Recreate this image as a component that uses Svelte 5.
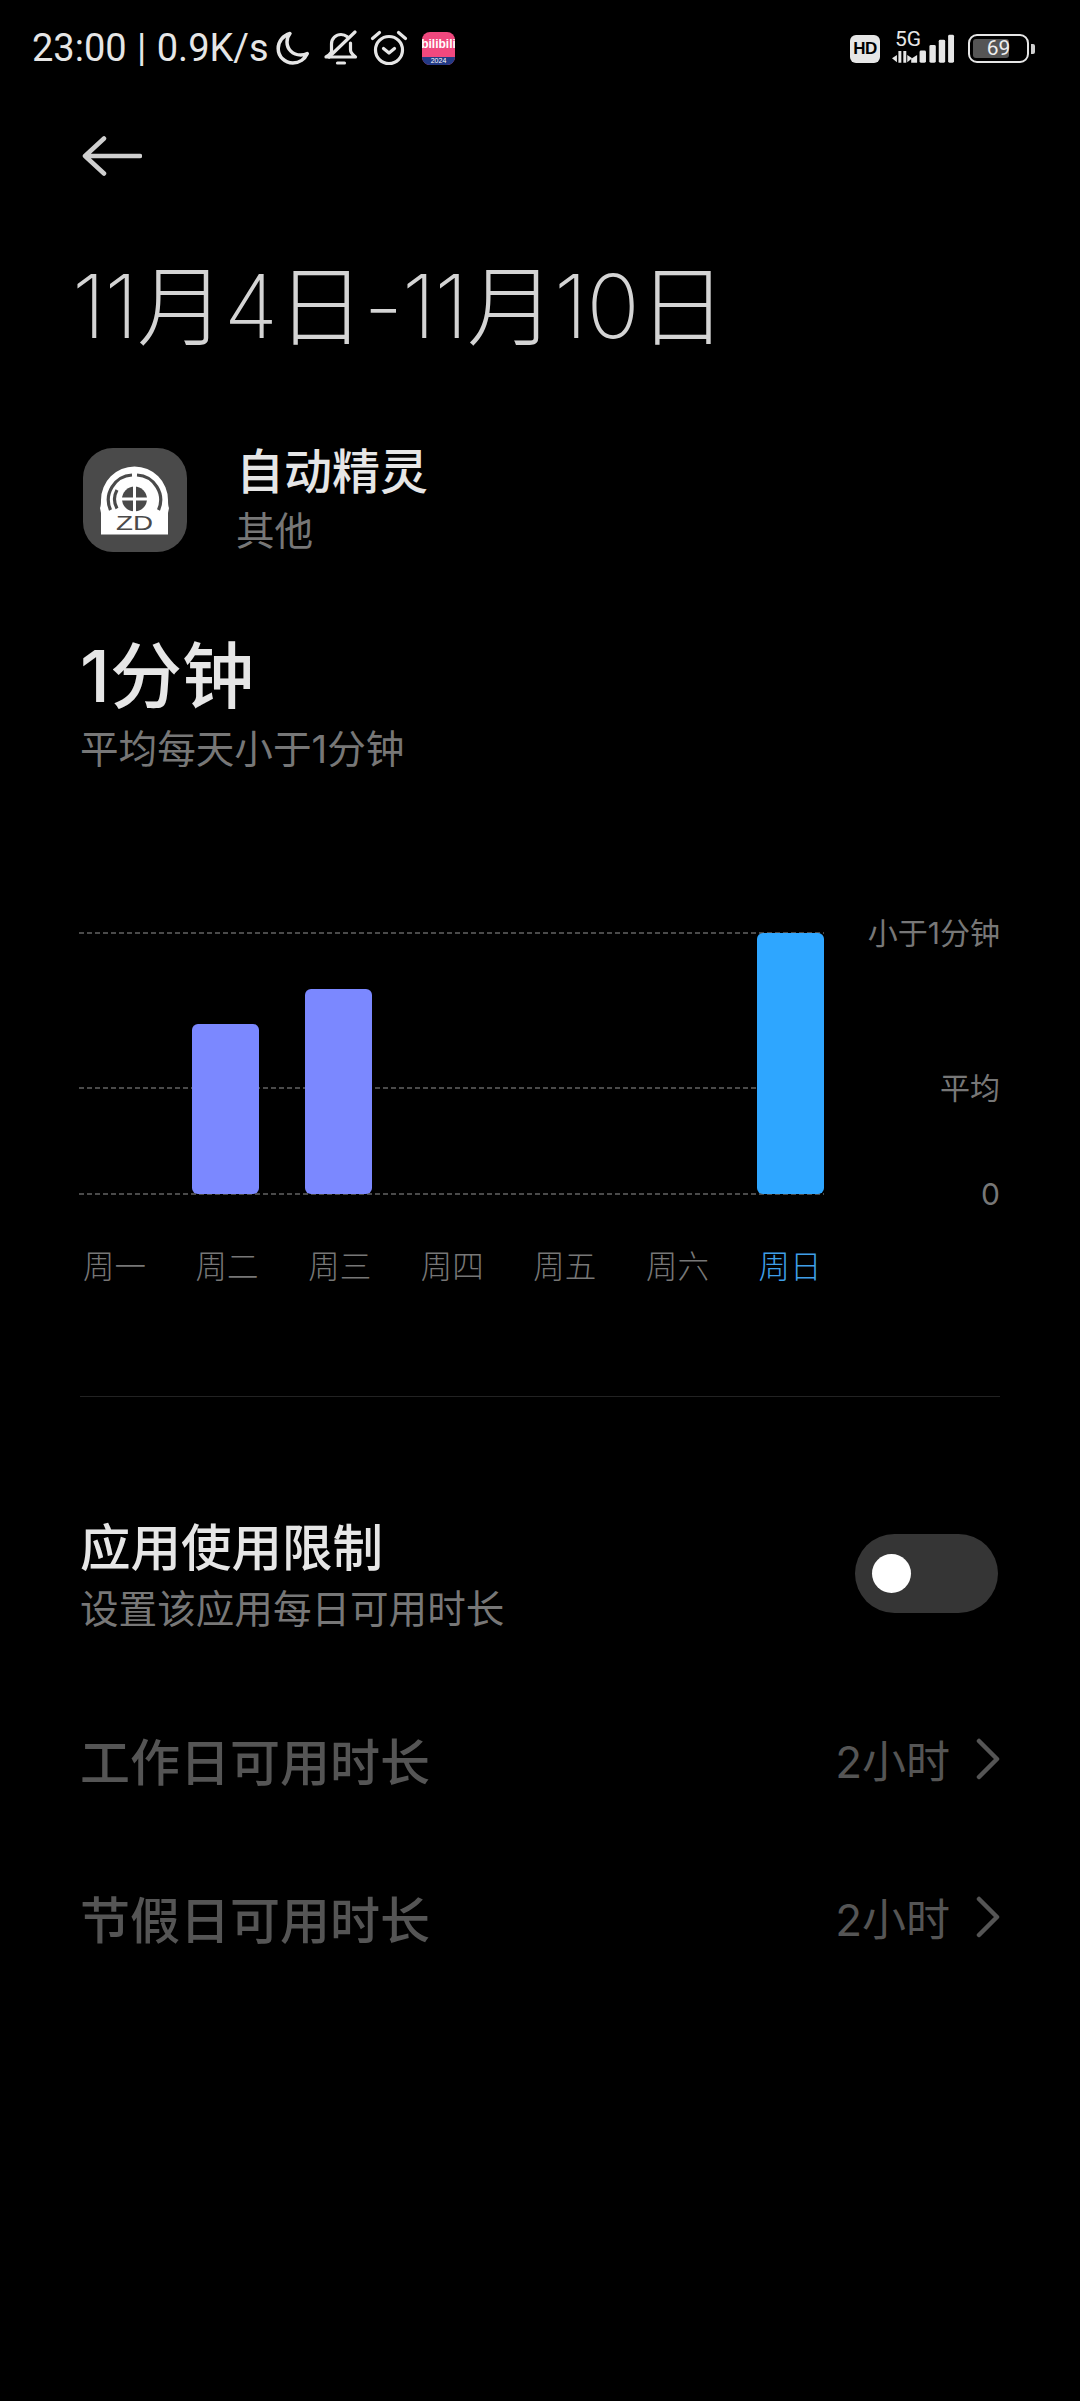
<script>
  const days = [
    { label: '周一', height: 0 },
    { label: '周二', height: 170 },
    { label: '周三', height: 205 },
    { label: '周四', height: 0 },
    { label: '周五', height: 0 },
    { label: '周六', height: 0 },
    { label: '周日', height: 261, active: true }
  ];
  const limits = ['工作日可用时长', '节假日可用时长'];
</script>

<div class="page">
  <header class="status">
    <div class="status-left">
      <span class="time">23:00 | 0.9K/s</span>
      <svg class="ico moon" viewBox="0 0 34 34" fill="none" stroke="#e6e6e6" stroke-width="3.500" stroke-linejoin="round" stroke-linecap="round">
        <path d="M14 2.500C7 4.500 2.200 10.500 2.200 17.500c0 8.200 6.600 14.500 14.600 14.500 6.500 0 12-3.800 14.500-9.500-2 1-4.200 1.500-6.600 1.500C16.500 24 11 18 11 11c0-3.200 1.100-6.200 3-8.500z"/>
      </svg>
      <svg class="ico bell" viewBox="0 0 36 36" fill="none" stroke="#e6e6e6" stroke-width="3.200" stroke-linecap="round" stroke-linejoin="round">
        <path d="M8.500 21V14C8.500 8.500 13 4.500 18 4.500c2.400 0 4.600.8 6.300 2.200"/>
        <path d="M27.500 13v7c0 2.500 2.500 5 5 7H3c2.200-1.300 4-2.800 5-4.500"/>
        <path d="M32 2 6 27"/>
        <path d="M14.500 33h7"/>
      </svg>
      <svg class="ico alarm" viewBox="0 0 38 36" fill="none" stroke="#e6e6e6" stroke-width="3.200" stroke-linecap="round" stroke-linejoin="round">
        <circle cx="19" cy="20" r="13.500"/>
        <path d="M13.500 18.500 19 23l5.500-4.500"/>
        <path d="M2.500 8.500 9.500 2.500M35.500 8.500 28.500 2.500"/>
      </svg>
      <div class="bili">
        <span class="bili-name">bilibili</span>
        <span class="bili-strip">2024</span>
      </div>
    </div>
    <div class="status-right">
      <span class="hd">HD</span>
      <div class="net">
        <span class="five">5G</span>
        <svg class="signal" viewBox="0 0 64 30" fill="#e6e6e6">
          <path d="M0 24.500l5-3.500v7.500zM6.500 17h3v12h-3zM11.500 17h3v12h-3zM15.500 21l5 3.500-5 4z"/>
          <path d="M19 25l6-4v8h-6z" transform="translate(0.500 0)"/>
          <rect x="28" y="16.500" width="6.500" height="12.500" rx="1.500"/>
          <rect x="38" y="11" width="6.500" height="18" rx="1.500"/>
          <rect x="47.500" y="5.500" width="6.500" height="23.500" rx="1.500"/>
          <rect x="57" y="0.500" width="6" height="28.500" rx="1.500"/>
        </svg>
      </div>
      <div class="battery">
        <div class="battery-body">
          <div class="battery-fill"></div>
          <span class="battery-num">69</span>
        </div>
        <div class="battery-tip"></div>
      </div>
    </div>
  </header>

  <svg class="back" viewBox="0 0 60 40" fill="none" stroke="#cfcfcf" stroke-width="4.500" stroke-linecap="round" stroke-linejoin="round">
    <path d="M22 2.500 3 20l19 17.500M3 20h55"/>
  </svg>

  <h1 class="title">11月4日-11月10日</h1>

  <section class="app">
    <svg class="app-icon" viewBox="0 0 104 104">
      <rect width="104" height="104" rx="30" fill="#4a4a4a"/>
      <path d="M18 52a33.500 33.500 0 0 1 67 0q0 6 1 8l-1 5v17q0 4-4 4H22q-4 0-4-4V65l-1-5q1-2 1-8z" fill="#fff"/>
      <g fill="none" stroke="#4a4a4a" stroke-width="3.200">
        <path d="M27.500 62A25 25 0 0 1 49 27"/>
        <path d="M75.500 62A25 25 0 0 0 54 27"/>
        <path d="M34 60.500A19 19 0 0 1 34 42"/>
      </g>
      <circle cx="51.500" cy="51" r="12.500" fill="#4a4a4a"/>
      <path d="M51.500 36v28M38 51h27" stroke="#fff" stroke-width="3"/>
      <rect x="18" y="63.500" width="67" height="23" fill="#fff"/>
      <text class="zd" x="33" y="81.500" textLength="37" lengthAdjust="spacingAndGlyphs">ZD</text>
    </svg>
    <div class="app-text">
      <div class="app-name">自动精灵</div>
      <div class="app-cat">其他</div>
    </div>
  </section>

  <section class="usage">
    <div class="usage-value">1分钟</div>
    <div class="usage-sub">平均每天小于1分钟</div>
  </section>

  <section class="chart">
    <div class="plot">
      <div class="line l-top"></div>
      <div class="line l-mid"></div>
      <div class="line l-bot"></div>
      <span class="axis a-top">小于1分钟</span>
      <span class="axis a-mid">平均</span>
      <span class="axis a-bot">0</span>
      <div class="bars">
        {#each days as d}
          <div class="bar" class:active={d.active} style="height:{d.height}px"></div>
        {/each}
      </div>
    </div>
    <div class="labels">
      {#each days as d}
        <span class="day" class:active={d.active}>{d.label}</span>
      {/each}
    </div>
  </section>

  <div class="divider"></div>

  <section class="limit">
    <div class="limit-text">
      <div class="limit-title">应用使用限制</div>
      <div class="limit-sub">设置该应用每日可用时长</div>
    </div>
    <div class="toggle"><div class="knob"></div></div>
  </section>

  {#each limits as name}
    <div class="row">
      <span class="row-name">{name}</span>
      <span class="row-val">2小时</span>
      <svg class="chev" viewBox="0 0 24 42" fill="none" stroke="#555" stroke-width="4.500" stroke-linecap="round" stroke-linejoin="round">
        <path d="M3 3l18 18L3 39"/>
      </svg>
    </div>
  {/each}
</div>

<style>
  :global(body) {
    margin: 0;
    background: #000;
  }
  .page {
    width: 1080px;
    height: 2401px;
    background: #000;
    color: #eee;
    font-family: Inter, "Noto Sans CJK SC", sans-serif;
    overflow: hidden;
  }
  .status {
    height: 96px;
    box-sizing: border-box;
    padding: 30px 44px 0 32px;
    display: flex;
    justify-content: space-between;
    align-items: flex-start;
  }
  .status-left {
    display: flex;
    align-items: center;
    height: 36px;
  }
  .time {
    font-family: Roboto, sans-serif;
    font-size: 38px;
    word-spacing: 1px;
    color: #e6e6e6;
    line-height: 36px;
    width: 244px;
    white-space: nowrap;
  }
  .ico {
    flex: none;
  }
  .moon { width: 34px; height: 34px; }
  .bell { width: 36px; height: 36px; margin-left: 13px; }
  .alarm { width: 38px; height: 36px; margin-left: 11px; }
  .bili {
    width: 33px;
    height: 33px;
    margin-left: 14px;
    border-radius: 8px;
    background: #f0487e;
    overflow: hidden;
    display: flex;
    flex-direction: column;
    align-items: center;
  }
  .bili-name {
    flex: 1;
    font-size: 12px;
    font-weight: 700;
    line-height: 24px;
    color: #fff;
    font-family: "Liberation Sans", sans-serif;
  }
  .bili-strip {
    width: 100%;
    height: 8px;
    background: #233a86;
    color: #fff;
    font-size: 7px;
    line-height: 8px;
    text-align: center;
    font-family: "Liberation Sans", sans-serif;
  }
  .status-right {
    display: flex;
    align-items: center;
    height: 34px;
  }
  .hd {
    width: 30px;
    height: 28px;
    margin-top: 4px;
    border-radius: 6px;
    background: #e6e6e6;
    color: #000;
    font-family: "Liberation Sans", sans-serif;
    font-size: 17px;
    font-weight: 700;
    line-height: 28px;
    text-align: center;
    letter-spacing: -0.500px;
  }
  .net {
    position: relative;
    width: 63px;
    height: 30px;
    margin: 4px 0 0 12px;
  }
  .five {
    position: absolute;
    left: 3px;
    top: -5px;
    font-family: Roboto, sans-serif;
    font-size: 21px;
    line-height: 20px;
    color: #e6e6e6;
  }
  .signal {
    position: absolute;
    left: 0;
    top: 0;
    width: 63px;
    height: 30px;
  }
  .battery {
    display: flex;
    align-items: center;
    margin: 3px 1px 0 13px;
  }
  .battery-body {
    position: relative;
    width: 61px;
    height: 29px;
    box-sizing: border-box;
    border: 2.500px solid #e6e6e6;
    border-radius: 9px;
  }
  .battery-fill {
    position: absolute;
    left: 3px;
    top: 3px;
    bottom: 3px;
    width: 36px;
    background: #555;
    border-radius: 3px;
  }
  .battery-num {
    position: absolute;
    inset: 0;
    text-align: center;
    font-family: Roboto, sans-serif;
    font-size: 21px;
    line-height: 24px;
    color: #eee;
  }
  .battery-tip {
    width: 4px;
    height: 10px;
    margin-left: 2px;
    background: #cfcfcf;
    border-radius: 0 2px 2px 0;
  }
  .back {
    display: block;
    width: 60px;
    height: 40px;
    margin: 40px 0 0 82px;
  }
  .title {
    margin: 80px 0 0 72px;
    font-family: Inter, "Noto Sans CJK SC", sans-serif;
    font-size: 88px;
    font-weight: 200;
    line-height: 100px;
    color: #d4d4d4;
    letter-spacing: -1px;
    white-space: nowrap;
  }
  .app {
    display: flex;
    align-items: center;
    gap: 49px;
    margin: 82px 0 0 83px;
  }
  .app-icon {
    width: 104px;
    height: 104px;
    flex: none;
  }
  .zd {
    font-family: "Liberation Sans", sans-serif;
    font-size: 20px;
    font-weight: 400;
    fill: #4a4a4a;
  }
  .app-text {
    padding-bottom: 8px;
  }
  .app-name {
    font-family: "Noto Sans CJK SC", sans-serif;
    font-size: 48px;
    font-weight: 500;
    line-height: 60px;
    color: #e6e6e6;
  }
  .app-cat {
    font-family: "Noto Sans CJK SC", sans-serif;
    font-size: 38.600px;
    line-height: 50px;
    margin-top: 5px;
    color: #777;
    font-weight: 400;
  }
  .usage {
    margin: 70px 0 0 80px;
  }
  .usage-value {
    font-size: 72px;
    font-weight: 500;
    line-height: 90px;
    color: #e6e6e6;
  }
  .usage-sub {
    font-size: 38.600px;
    line-height: 50px;
    margin-top: 2.500px;
    color: #777;
  }
  .chart {
    padding-top: 159.500px;
  }
  .plot {
    position: relative;
    height: 262px;
  }
  .line {
    position: absolute;
    left: 79px;
    width: 745px;
    height: 2px;
    margin-top: -1px;
    background: repeating-linear-gradient(90deg, #4a4a4a 0 5px, transparent 5px 8px);
  }
  .l-top { top: 0; }
  .l-mid { top: 155px; }
  .l-bot { top: 261px; }
  .axis {
    position: absolute;
    right: 80px;
    font-size: 30px;
    line-height: 40px;
    color: #777;
  }
  .a-top { top: -20px; }
  .a-mid { top: 135px; }
  .a-bot { top: 241px; }
  .bars {
    position: absolute;
    left: 79px;
    top: 0;
    height: 261px;
    display: flex;
    align-items: flex-end;
    gap: 46px;
  }
  .bar {
    width: 67px;
    border-radius: 6px;
    background: #7b88ff;
  }
  .bar.active {
    background: #2ea6ff;
  }
  .labels {
    display: flex;
    gap: 45.600px;
    margin: 52px 0 0 81px;
  }
  .day {
    width: 67px;
    display: flex;
    justify-content: center;
    white-space: nowrap;
    font-size: 31.500px;
    line-height: 40px;
    color: #777;
    font-weight: 300;
  }
  .day.active {
    color: #3f9fe8;
  }
  .divider {
    height: 1px;
    margin: 109px 80px 0;
    background: #222;
  }
  .limit {
    display: flex;
    justify-content: space-between;
    align-items: center;
    margin: 109.750px 82px 0 80px;
  }
  .limit-text {
    padding-top: 10px;
  }
  .limit-title {
    font-size: 50.500px;
    font-weight: 500;
    line-height: 62px;
    color: #e6e6e6;
  }
  .limit-sub {
    font-size: 38.600px;
    line-height: 61.500px;
    color: #777;
  }
  .toggle {
    width: 143px;
    height: 79px;
    border-radius: 40px;
    background: #353535;
    display: flex;
    align-items: center;
    padding-left: 17px;
    box-sizing: border-box;
  }
  .knob {
    width: 39px;
    height: 39px;
    border-radius: 50%;
    background: #fff;
  }
  .row {
    display: flex;
    align-items: center;
    height: 158.500px;
    margin: 0 80px;
    color: #555;
  }
  .limit + .row {
    margin-top: 39.250px;
  }
  .row-name {
    flex: 1;
    font-size: 50px;
    font-weight: 500;
  }
  .row-val {
    font-size: 44px;
  }
  .chev {
    width: 24px;
    height: 42px;
    margin-left: 26px;
  }
</style>
